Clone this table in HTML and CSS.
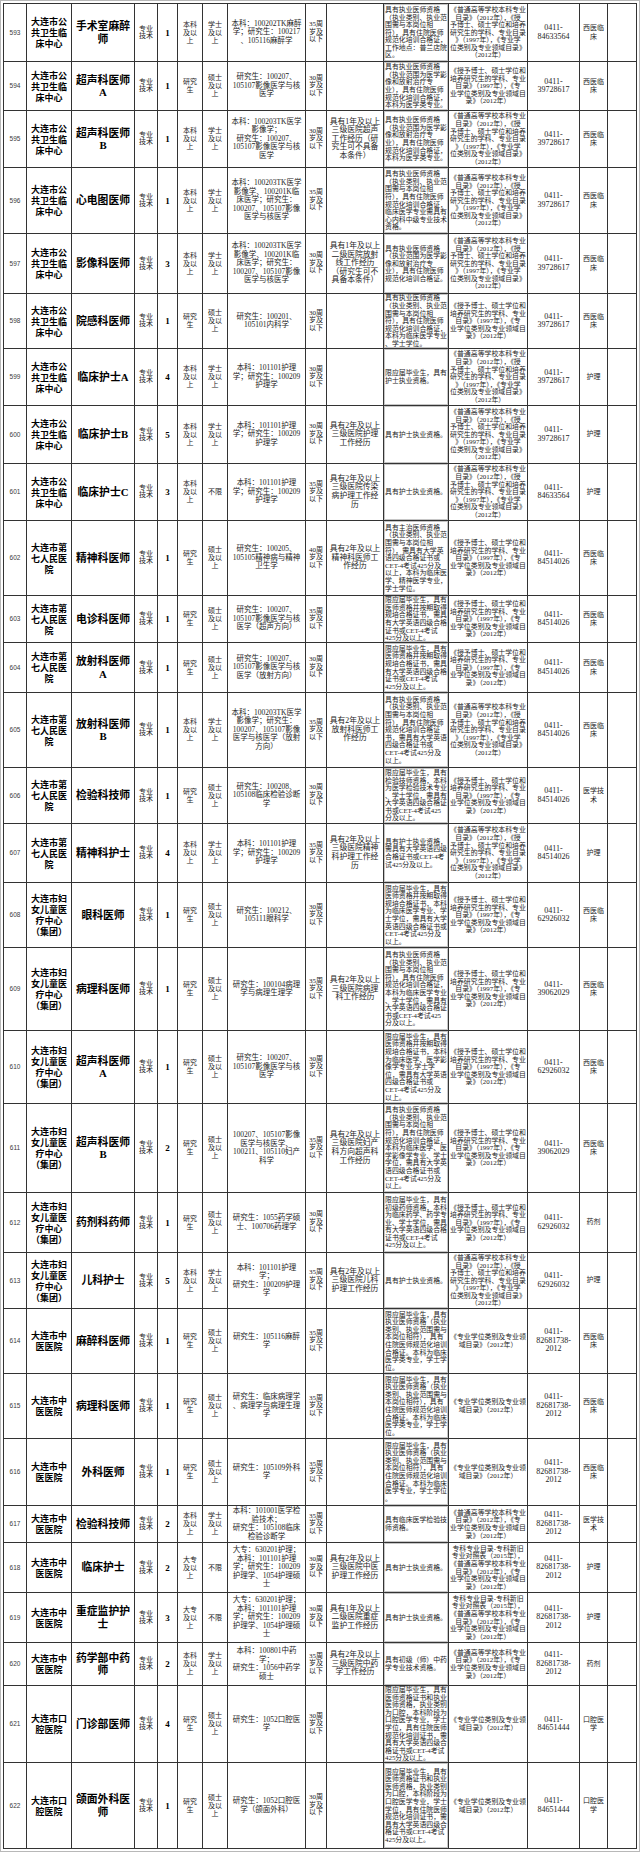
FILE: index.html
```html
<!DOCTYPE html>
<html lang="zh-CN">
<head>
<meta charset="utf-8">
<title>岗位信息表</title>
<link rel="stylesheet" href="styles.css">
</head>
<body>
<div class="frame">
<table class="jobs">
<colgroup>
<col class="w-no"><col class="w-unit"><col class="w-pos"><col class="w-cat"><col class="w-num"><col class="w-edu"><col class="w-deg"><col class="w-major"><col class="w-age"><col class="w-exp"><col class="w-cond"><col class="w-cata"><col class="w-tel"><col class="w-spec"><col class="w-note">
</colgroup>
<tbody>
<tr class="h58"><td class="no">593</td><td class="unit">大连市公<br>共卫生临<br>床中心</td><td class="pos">手术室麻醉<br>师</td><td class="cat">专业<br>技术</td><td class="num">1</td><td class="edu">本科<br>及以<br>上</td><td class="edu">学士<br>及以<br>上</td><td class="major">本科：100202TK麻醉<br>学；研究生：100217<br>、105116麻醉学</td><td class="age">35周<br>岁及<br>以下</td><td class="exp"></td><td class="cond">具有执业医师资格<br>（执业类别、执业范<br>围需与本岗位相<br>符），具有住院医师<br>规范化培训合格证，<br>工作地点：普兰店院<br>区。</td><td class="cata">《普通高等学校本科专业<br>目录》（2012年），《授<br>予博士、硕士学位和培养<br>研究生的学科、专业目录<br>》（1997年），《专业学<br>位类别及专业领域目录》<br>（2012年）</td><td class="tel">0411-<br>84633564</td><td class="spec">西医临<br>床</td><td></td></tr>
<tr class="h49"><td class="no">594</td><td class="unit">大连市公<br>共卫生临<br>床中心</td><td class="pos">超声科医师<br>A</td><td class="cat">专业<br>技术</td><td class="num">1</td><td class="edu">研究<br>生</td><td class="edu">硕士<br>及以<br>上</td><td class="major">研究生：100207、<br>105107影像医学与核<br>医学</td><td class="age">30周<br>岁及<br>以下</td><td class="exp"></td><td class="cond">具有执业医师资格<br>（执业范围为医学影<br>像和放射治疗专<br>业），具有住院医师<br>规范化培训合格证，<br>本科为医学类专业。</td><td class="cata">《授予博士、硕士学位和<br>培养研究生的学科、专业<br>目录》（1997年），《专<br>业学位类别及专业领域目<br>录》（2012年）</td><td class="tel">0411-<br>39728617</td><td class="spec">西医临<br>床</td><td></td></tr>
<tr class="h57"><td class="no">595</td><td class="unit">大连市公<br>共卫生临<br>床中心</td><td class="pos">超声科医师<br>B</td><td class="cat">专业<br>技术</td><td class="num">1</td><td class="edu">本科<br>及以<br>上</td><td class="edu">学士<br>及以<br>上</td><td class="major">本科：100203TK医学<br>影像学；<br>研究生：100207、<br>105107影像医学与核<br>医学</td><td class="age">30周<br>岁及<br>以下</td><td class="exp">具有1年及以上<br>三级医院超声<br>工作经历（研<br>究生可不具备<br>本条件）</td><td class="cond">具有执业医师资格<br>（执业范围为医学影<br>像和放射治疗专<br>业），具有住院医师<br>规范化培训合格证，<br>本科为医学类专业。</td><td class="cata">《普通高等学校本科专业<br>目录》（2012年），《授<br>予博士、硕士学位和培养<br>研究生的学科、专业目录<br>》（1997年），《专业学<br>位类别及专业领域目录》<br>（2012年）</td><td class="tel">0411-<br>39728617</td><td class="spec">西医临<br>床</td><td></td></tr>
<tr class="h66"><td class="no">596</td><td class="unit">大连市公<br>共卫生临<br>床中心</td><td class="pos">心电图医师</td><td class="cat">专业<br>技术</td><td class="num">1</td><td class="edu">本科<br>及以<br>上</td><td class="edu">学士<br>及以<br>上</td><td class="major">本科：100203TK医学<br>影像学、100201K临<br>床医学；研究生：<br>100207、105107影像<br>医学与核医学</td><td class="age">35周<br>岁及<br>以下</td><td class="exp"></td><td class="cond">具有执业医师资格<br>（执业类别、执业范<br>围需与本岗位相<br>符），具有住院医师<br>规范化培训合格证，<br>临床医学专业需具有<br>心内科中级专业技术<br>资格。</td><td class="cata">《普通高等学校本科专业<br>目录》（2012年），《授<br>予博士、硕士学位和培养<br>研究生的学科、专业目录<br>》（1997年），《专业学<br>位类别及专业领域目录》<br>（2012年）</td><td class="tel">0411-<br>39728617</td><td class="spec">西医临<br>床</td><td></td></tr>
<tr class="h60"><td class="no">597</td><td class="unit">大连市公<br>共卫生临<br>床中心</td><td class="pos">影像科医师</td><td class="cat">专业<br>技术</td><td class="num">3</td><td class="edu">本科<br>及以<br>上</td><td class="edu">学士<br>及以<br>上</td><td class="major">本科：100203TK医学<br>影像学、100201K临<br>床医学；研究生：<br>100207、105107影像<br>医学与核医学</td><td class="age">30周<br>岁及<br>以下</td><td class="exp">具有1年及以上<br>二级医院放射<br>线工作经历<br>（研究生可不<br>具备本条件）</td><td class="cond">具有执业医师资格<br>（执业范围为医学影<br>像和放射治疗专<br>业），具有住院医师<br>规范化培训合格证。</td><td class="cata">《普通高等学校本科专业<br>目录》（2012年），《授<br>予博士、硕士学位和培养<br>研究生的学科、专业目录<br>》（1997年），《专业学<br>位类别及专业领域目录》<br>（2012年）</td><td class="tel">0411-<br>39728617</td><td class="spec">西医临<br>床</td><td></td></tr>
<tr class="h55"><td class="no">598</td><td class="unit">大连市公<br>共卫生临<br>床中心</td><td class="pos">院感科医师</td><td class="cat">专业<br>技术</td><td class="num">1</td><td class="edu">研究<br>生</td><td class="edu">硕士<br>及以<br>上</td><td class="major">研究生：100201、<br>105101内科学</td><td class="age">30周<br>岁及<br>以下</td><td class="exp"></td><td class="cond">具有执业医师资格<br>（执业类别、执业范<br>围需与本岗位相<br>符），具有住院医师<br>规范化培训合格证，<br>本科为临床医学专业<br>、学士学位。</td><td class="cata">《授予博士、硕士学位和<br>培养研究生的学科、专业<br>目录》（1997年），《专<br>业学位类别及专业领域目<br>录》（2012年）</td><td class="tel">0411-<br>39728617</td><td class="spec">西医临<br>床</td><td></td></tr>
<tr class="h57"><td class="no">599</td><td class="unit">大连市公<br>共卫生临<br>床中心</td><td class="pos">临床护士A</td><td class="cat">专业<br>技术</td><td class="num">4</td><td class="edu">本科<br>及以<br>上</td><td class="edu">学士<br>及以<br>上</td><td class="major">本科：101101护理<br>学；研究生：100209<br>护理学</td><td class="age">30周<br>岁及<br>以下</td><td class="exp"></td><td class="cond">限应届毕业生，具有<br>护士执业资格。</td><td class="cata">《普通高等学校本科专业<br>目录》（2012年），《授<br>予博士、硕士学位和培养<br>研究生的学科、专业目录<br>》（1997年），《专业学<br>位类别及专业领域目录》<br>（2012年）</td><td class="tel">0411-<br>39728617</td><td class="spec">护理</td><td></td></tr>
<tr class="h58"><td class="no">600</td><td class="unit">大连市公<br>共卫生临<br>床中心</td><td class="pos">临床护士B</td><td class="cat">专业<br>技术</td><td class="num">5</td><td class="edu">本科<br>及以<br>上</td><td class="edu">学士<br>及以<br>上</td><td class="major">本科：101101护理<br>学；研究生：100209<br>护理学</td><td class="age">30周<br>岁及<br>以下</td><td class="exp">具有2年及以上<br>三级医院护理<br>工作经历</td><td class="cond">具有护士执业资格。</td><td class="cata">《普通高等学校本科专业<br>目录》（2012年），《授<br>予博士、硕士学位和培养<br>研究生的学科、专业目录<br>》（1997年），《专业学<br>位类别及专业领域目录》<br>（2012年）</td><td class="tel">0411-<br>39728617</td><td class="spec">护理</td><td></td></tr>
<tr class="h57"><td class="no">601</td><td class="unit">大连市公<br>共卫生临<br>床中心</td><td class="pos">临床护士C</td><td class="cat">专业<br>技术</td><td class="num">3</td><td class="edu">本科<br>及以<br>上</td><td class="edu">不限</td><td class="major">本科：101101护理<br>学；研究生：100209<br>护理学</td><td class="age">35周<br>岁及<br>以下</td><td class="exp">具有2年及以上<br>三级医院传染<br>病护理工作经<br>历</td><td class="cond">具有护士执业资格。</td><td class="cata">《普通高等学校本科专业<br>目录》（2012年），《授<br>予博士、硕士学位和培养<br>研究生的学科、专业目录<br>》（1997年），《专业学<br>位类别及专业领域目录》<br>（2012年）</td><td class="tel">0411-<br>84633564</td><td class="spec">护理</td><td></td></tr>
<tr class="h75"><td class="no">602</td><td class="unit">大连市第<br>七人民医<br>院</td><td class="pos">精神科医师</td><td class="cat">专业<br>技术</td><td class="num">1</td><td class="edu">研究<br>生</td><td class="edu">硕士<br>及以<br>上</td><td class="major">研究生：100205、<br>105105精神病与精神<br>卫生学</td><td class="age">40周<br>岁及<br>以下</td><td class="exp">具有2年及以上<br>精神科医师工<br>作经历</td><td class="cond">具有主治医师资格<br>（执业类别、执业范<br>围需与本岗位相<br>符），需具有大学英<br>语四级合格证书或<br>CET-4考试425分及<br>以上，本科为临床医<br>学、精神医学专业，<br>学士学位。</td><td class="cata">《授予博士、硕士学位和<br>培养研究生的学科、专业<br>目录》（1997年），《专<br>业学位类别及专业领域目<br>录》（2012年）</td><td class="tel">0411-<br>84514026</td><td class="spec">西医临<br>床</td><td></td></tr>
<tr class="h47"><td class="no">603</td><td class="unit">大连市第<br>七人民医<br>院</td><td class="pos">电诊科医师</td><td class="cat">专业<br>技术</td><td class="num">1</td><td class="edu">研究<br>生</td><td class="edu">硕士<br>及以<br>上</td><td class="major">研究生：100207、<br>105107影像医学与核<br>医学（超声方向）</td><td class="age">35周<br>岁及<br>以下</td><td class="exp"></td><td class="cond">限应届毕业生，具有<br>医师资格并按期取得<br>规培合格证书，需具<br>有大学英语四级合格<br>证书或CET-4考试<br>425分及以上。</td><td class="cata">《授予博士、硕士学位和<br>培养研究生的学科、专业<br>目录》（1997年），《专<br>业学位类别及专业领域目<br>录》（2012年）</td><td class="tel">0411-<br>84514026</td><td class="spec">西医临<br>床</td><td></td></tr>
<tr class="h50"><td class="no">604</td><td class="unit">大连市第<br>七人民医<br>院</td><td class="pos">放射科医师<br>A</td><td class="cat">专业<br>技术</td><td class="num">1</td><td class="edu">研究<br>生</td><td class="edu">硕士<br>及以<br>上</td><td class="major">研究生：100207、<br>105107影像医学与核<br>医学（放射方向）</td><td class="age">30周<br>岁及<br>以下</td><td class="exp"></td><td class="cond">限应届毕业生，具有<br>医师资格并按期取得<br>规培合格证书，需具<br>有大学英语四级合格<br>证书或CET-4考试<br>425分及以上。</td><td class="cata">《授予博士、硕士学位和<br>培养研究生的学科、专业<br>目录》（1997年），《专<br>业学位类别及专业领域目<br>录》（2012年）</td><td class="tel">0411-<br>84514026</td><td class="spec">西医临<br>床</td><td></td></tr>
<tr class="h75"><td class="no">605</td><td class="unit">大连市第<br>七人民医<br>院</td><td class="pos">放射科医师<br>B</td><td class="cat">专业<br>技术</td><td class="num">1</td><td class="edu">本科<br>及以<br>上</td><td class="edu">学士<br>及以<br>上</td><td class="major">本科：100203TK医学<br>影像学；研究生：<br>100207、105107影像<br>医学与核医学（放射<br>方向）</td><td class="age">35周<br>岁及<br>以下</td><td class="exp">具有2年及以上<br>放射科医师工<br>作经历</td><td class="cond">具有执业医师资格<br>（执业类别、执业范<br>围需与本岗位相<br>符），具有住院医师<br>规范化培训合格证<br>书，需具有大学英语<br>四级合格证书或<br>CET-4考试425分及<br>以上。</td><td class="cata">《普通高等学校本科专业<br>目录》（2012年），《授<br>予博士、硕士学位和培养<br>研究生的学科、专业目录<br>》（1997年），《专业学<br>位类别及专业领域目录》<br>（2012年）</td><td class="tel">0411-<br>84514026</td><td class="spec">西医临<br>床</td><td></td></tr>
<tr class="h56"><td class="no">606</td><td class="unit">大连市第<br>七人民医<br>院</td><td class="pos">检验科技师</td><td class="cat">专业<br>技术</td><td class="num">1</td><td class="edu">研究<br>生</td><td class="edu">硕士<br>及以<br>上</td><td class="major">研究生：100208、<br>105108临床检验诊断<br>学</td><td class="age">30周<br>岁及<br>以下</td><td class="exp"></td><td class="cond">限应届毕业生，具有<br>检验技师资格，本科<br>为医学检验技术专业<br>、学士学位，需具有<br>大学英语四级合格证<br>书或CET-4考试425<br>分及以上。</td><td class="cata">《授予博士、硕士学位和<br>培养研究生的学科、专业<br>目录》（1997年），《专<br>业学位类别及专业领域目<br>录》（2012年）</td><td class="tel">0411-<br>84514026</td><td class="spec">医学技<br>术</td><td></td></tr>
<tr class="h59"><td class="no">607</td><td class="unit">大连市第<br>七人民医<br>院</td><td class="pos">精神科护士</td><td class="cat">专业<br>技术</td><td class="num">4</td><td class="edu">本科<br>及以<br>上</td><td class="edu">学士<br>及以<br>上</td><td class="major">本科：101101护理<br>学；研究生：100209<br>护理学</td><td class="age">35周<br>岁及<br>以下</td><td class="exp">具有2年及以上<br>三级医院精神<br>科护理工作经<br>历</td><td class="cond">具有护士执业资格，<br>需具有大学英语四级<br>合格证书或CET-4考<br>试425分及以上。</td><td class="cata">《普通高等学校本科专业<br>目录》（2012年），《授<br>予博士、硕士学位和培养<br>研究生的学科、专业目录<br>》（1997年），《专业学<br>位类别及专业领域目录》<br>（2012年）</td><td class="tel">0411-<br>84514026</td><td class="spec">护理</td><td></td></tr>
<tr class="h65"><td class="no">608</td><td class="unit">大连市妇<br>女儿童医<br>疗中心<br>（集团）</td><td class="pos">眼科医师</td><td class="cat">专业<br>技术</td><td class="num">1</td><td class="edu">研究<br>生</td><td class="edu">硕士<br>及以<br>上</td><td class="major">研究生：100212、<br>105111眼科学</td><td class="age">30周<br>岁及<br>以下</td><td class="exp"></td><td class="cond">限应届毕业生，具有<br>医师资格并按期取得<br>规培合格证书，本科<br>为临床医学专业、学<br>士学位，需具有大学<br>英语四级合格证书或<br>CET-4考试425分及<br>以上。</td><td class="cata">《授予博士、硕士学位和<br>培养研究生的学科、专业<br>目录》（1997年），《专<br>业学位类别及专业领域目<br>录》（2012年）</td><td class="tel">0411-<br>62926032</td><td class="spec">西医临<br>床</td><td></td></tr>
<tr class="h83"><td class="no">609</td><td class="unit">大连市妇<br>女儿童医<br>疗中心<br>（集团）</td><td class="pos">病理科医师</td><td class="cat">专业<br>技术</td><td class="num">1</td><td class="edu">研究<br>生</td><td class="edu">硕士<br>及以<br>上</td><td class="major">研究生：100104病理<br>学与病理生理学</td><td class="age">35周<br>岁及<br>以下</td><td class="exp">具有2年及以上<br>三级医院病理<br>科工作经历</td><td class="cond">具有执业医师资格<br>（执业类别、执业范<br>围需与本岗位相<br>符），具有住院医师<br>规范化培训合格证，<br>本科为临床医学专业<br>、学士学位，需具有<br>大学英语四级合格证<br>书或CET-4考试425<br>分及以上。</td><td class="cata">《授予博士、硕士学位和<br>培养研究生的学科、专业<br>目录》（1997年），《专<br>业学位类别及专业领域目<br>录》（2012年）</td><td class="tel">0411-<br>39062029</td><td class="spec">西医临<br>床</td><td></td></tr>
<tr class="h73"><td class="no">610</td><td class="unit">大连市妇<br>女儿童医<br>疗中心<br>（集团）</td><td class="pos">超声科医师<br>A</td><td class="cat">专业<br>技术</td><td class="num">1</td><td class="edu">研究<br>生</td><td class="edu">硕士<br>及以<br>上</td><td class="major">研究生：100207、<br>105107影像医学与核<br>医学</td><td class="age">30周<br>岁及<br>以下</td><td class="exp"></td><td class="cond">限应届毕业生，具有<br>医师资格并按期取得<br>规培合格证书，本科<br>为临床医学、医学影<br>像学专业,学士学<br>位，需具有大学英语<br>四级合格证书或<br>CET-4考试425分及<br>以上。</td><td class="cata">《授予博士、硕士学位和<br>培养研究生的学科、专业<br>目录》（1997年），《专<br>业学位类别及专业领域目<br>录》（2012年）</td><td class="tel">0411-<br>62926032</td><td class="spec">西医临<br>床</td><td></td></tr>
<tr class="h89"><td class="no">611</td><td class="unit">大连市妇<br>女儿童医<br>疗中心<br>（集团）</td><td class="pos">超声科医师<br>B</td><td class="cat">专业<br>技术</td><td class="num">2</td><td class="edu">研究<br>生</td><td class="edu">硕士<br>及以<br>上</td><td class="major">100207、105107影像<br>医学与核医学、<br>100211、105110妇产<br>科学</td><td class="age">35周<br>岁及<br>以下</td><td class="exp">具有2年及以上<br>三级医院妇产<br>科方向超声科<br>工作经历</td><td class="cond">具有执业医师资格<br>（执业类别、执业范<br>围需与本岗位相<br>符），具有住院医师<br>规范化培训合格证，<br>本科为临床医学、医<br>学影像学专业、学士<br>学位，需具有大学英<br>语四级合格证书或<br>CET-4考试425分及<br>以上。</td><td class="cata">《授予博士、硕士学位和<br>培养研究生的学科、专业<br>目录》（1997年），《专<br>业学位类别及专业领域目<br>录》（2012年）</td><td class="tel">0411-<br>39062029</td><td class="spec">西医临<br>床</td><td></td></tr>
<tr class="h60"><td class="no">612</td><td class="unit">大连市妇<br>女儿童医<br>疗中心<br>（集团）</td><td class="pos">药剂科药师</td><td class="cat">专业<br>技术</td><td class="num">1</td><td class="edu">研究<br>生</td><td class="edu">硕士<br>及以<br>上</td><td class="major">研究生：1055药学硕<br>士、100706药理学</td><td class="age">30周<br>岁及<br>以下</td><td class="exp"></td><td class="cond">限应届毕业生，具有<br>初级药师资格，本科<br>为临床药学、药学专<br>业、学士学位，需具<br>有大学英语四级合格<br>证书或CET-4考试<br>425分及以上。</td><td class="cata">《授予博士、硕士学位和<br>培养研究生的学科、专业<br>目录》（1997年），《专<br>业学位类别及专业领域目<br>录》（2012年）</td><td class="tel">0411-<br>62926032</td><td class="spec">药剂</td><td></td></tr>
<tr class="h56"><td class="no">613</td><td class="unit">大连市妇<br>女儿童医<br>疗中心<br>（集团）</td><td class="pos">儿科护士</td><td class="cat">专业<br>技术</td><td class="num">5</td><td class="edu">本科<br>及以<br>上</td><td class="edu">学士<br>及以<br>上</td><td class="major">本科：101101护理<br>学；<br>研究生：100209护理<br>学</td><td class="age">35周<br>岁及<br>以下</td><td class="exp">具有2年及以上<br>三级医院儿科<br>护理工作经历</td><td class="cond">具有护士执业资格。</td><td class="cata">《普通高等学校本科专业<br>目录》（2012年），《授<br>予博士、硕士学位和培养<br>研究生的学科、专业目录<br>》（1997年），《专业学<br>位类别及专业领域目录》<br>（2012年）</td><td class="tel">0411-<br>62926032</td><td class="spec">护理</td><td></td></tr>
<tr class="h65"><td class="no">614</td><td class="unit">大连市中<br>医医院</td><td class="pos">麻醉科医师</td><td class="cat">专业<br>技术</td><td class="num">1</td><td class="edu">研究<br>生</td><td class="edu">硕士<br>及以<br>上</td><td class="major">研究生：105116麻醉<br>学</td><td class="age">35周<br>岁及<br>以下</td><td class="exp"></td><td class="cond">限应届毕业生，具有<br>执业医师资格（执业<br>类别、执业范围需与<br>本岗位相符），具有<br>住院医师规范化培训<br>合格证。本科为临床<br>医学类专业，学士学<br>位。</td><td class="cata">《专业学位类别及专业领<br>域目录》（2012年）</td><td class="tel">0411-<br>82681738-<br>2012</td><td class="spec">西医临<br>床</td><td></td></tr>
<tr class="h65"><td class="no">615</td><td class="unit">大连市中<br>医医院</td><td class="pos">病理科医师</td><td class="cat">专业<br>技术</td><td class="num">1</td><td class="edu">研究<br>生</td><td class="edu">硕士<br>及以<br>上</td><td class="major">研究生：临床病理学<br>、病理学与病理生理<br>学</td><td class="age">35周<br>岁及<br>以下</td><td class="exp"></td><td class="cond">限应届毕业生，具有<br>执业医师资格（执业<br>类别、执业范围需与<br>本岗位相符），具有<br>住院医师规范化培训<br>合格证。本科为临床<br>医学类专业，学士学<br>位。</td><td class="cata">《专业学位类别及专业领<br>域目录》（2012年）</td><td class="tel">0411-<br>82681738-<br>2012</td><td class="spec">西医临<br>床</td><td></td></tr>
<tr class="h67"><td class="no">616</td><td class="unit">大连市中<br>医医院</td><td class="pos">外科医师</td><td class="cat">专业<br>技术</td><td class="num">1</td><td class="edu">研究<br>生</td><td class="edu">硕士<br>及以<br>上</td><td class="major">研究生：105109外科<br>学</td><td class="age">35周<br>岁及<br>以下</td><td class="exp"></td><td class="cond">限应届毕业生，具有<br>执业医师资格（执业<br>类别、执业范围需与<br>本岗位相符），具有<br>住院医师规范化培训<br>合格证。本科为临床<br>医学专业，学士学位<br>。</td><td class="cata">《专业学位类别及专业领<br>域目录》（2012年）</td><td class="tel">0411-<br>82681738-<br>2012</td><td class="spec">西医临<br>床</td><td></td></tr>
<tr class="h37"><td class="no">617</td><td class="unit">大连市中<br>医医院</td><td class="pos">检验科技师</td><td class="cat">专业<br>技术</td><td class="num">2</td><td class="edu">本科<br>及以<br>上</td><td class="edu">学士<br>及以<br>上</td><td class="major">本科：101001医学检<br>验技术；<br>研究生：105108临床<br>检验诊断学</td><td class="age">35周<br>岁及<br>以下</td><td class="exp"></td><td class="cond">具有临床医学检验技<br>师资格。</td><td class="cata">《普通高等学校本科专业<br>目录》（2012年），《专<br>业学位类别及专业领域目<br>录》（2012年）</td><td class="tel">0411-<br>82681738-<br>2012</td><td class="spec">医学技<br>术</td><td></td></tr>
<tr class="h50"><td class="no">618</td><td class="unit">大连市中<br>医医院</td><td class="pos">临床护士</td><td class="cat">专业<br>技术</td><td class="num">2</td><td class="edu">大专<br>及以<br>上</td><td class="edu">不限</td><td class="major">大专：630201护理；<br>本科：101101护理<br>学；研究生：100209<br>护理学、1054护理硕<br>士</td><td class="age">30周<br>岁及<br>以下</td><td class="exp">具有2年及以上<br>三级医院中医<br>护理工作经历</td><td class="cond">具有护士执业资格。</td><td class="cata">专科专业目录-专科新旧<br>专业对照表（2015年），<br>《普通高等学校本科专业<br>目录》（2012年），《专<br>业学位类别及专业领域目<br>录》（2012年）</td><td class="tel">0411-<br>82681738-<br>2012</td><td class="spec">护理</td><td></td></tr>
<tr class="h50"><td class="no">619</td><td class="unit">大连市中<br>医医院</td><td class="pos">重症监护护<br>士</td><td class="cat">专业<br>技术</td><td class="num">3</td><td class="edu">大专<br>及以<br>上</td><td class="edu">不限</td><td class="major">大专：630201护理；<br>本科：101101护理<br>学；研究生：100209<br>护理学、1054护理硕<br>士</td><td class="age">30周<br>岁及<br>以下</td><td class="exp">具有1年及以上<br>二级医院重症<br>监护工作经历</td><td class="cond">具有护士执业资格。</td><td class="cata">专科专业目录-专科新旧<br>专业对照表（2015年），<br>《普通高等学校本科专业<br>目录》（2012年），《专<br>业学位类别及专业领域目<br>录》（2012年）</td><td class="tel">0411-<br>82681738-<br>2012</td><td class="spec">护理</td><td></td></tr>
<tr class="h43"><td class="no">620</td><td class="unit">大连市中<br>医医院</td><td class="pos">药学部中药<br>师</td><td class="cat">专业<br>技术</td><td class="num">2</td><td class="edu">本科<br>及以<br>上</td><td class="edu">学士<br>及以<br>上</td><td class="major">本科：100801中药<br>学；<br>研究生：1056中药学<br>硕士</td><td class="age">35周<br>岁及<br>以下</td><td class="exp">具有2年及以上<br>三级医院中药<br>学工作经历</td><td class="cond">具有初级（师）中药<br>学专业技术资格。</td><td class="cata">《普通高等学校本科专业<br>目录》（2012年），《专<br>业学位类别及专业领域目<br>录》（2012年）</td><td class="tel">0411-<br>82681738-<br>2012</td><td class="spec">药剂</td><td></td></tr>
<tr class="h77"><td class="no">621</td><td class="unit">大连市口<br>腔医院</td><td class="pos">门诊部医师</td><td class="cat">专业<br>技术</td><td class="num">4</td><td class="edu">研究<br>生</td><td class="edu">硕士<br>及以<br>上</td><td class="major">研究生：1052口腔医<br>学</td><td class="age">30周<br>岁及<br>以下</td><td class="exp"></td><td class="cond">限应届毕业生，具有<br>医师资格证书和执业<br>医师资格，执业类别<br>为口腔，本科阶段为<br>口腔医学专业，学士<br>学位，具有住院医师<br>规范化培训证书，需<br>具有大学英语四级合<br>格证书或CET-4考试<br>425分及以上。</td><td class="cata">《专业学位类别及专业领<br>域目录》（2012年）</td><td class="tel">0411-<br>84651444</td><td class="spec">口腔医<br>学</td><td></td></tr>
<tr class="h86"><td class="no">622</td><td class="unit">大连市口<br>腔医院</td><td class="pos">颌面外科医<br>师</td><td class="cat">专业<br>技术</td><td class="num">1</td><td class="edu">研究<br>生</td><td class="edu">硕士<br>及以<br>上</td><td class="major">研究生：1052口腔医<br>学（颌面外科）</td><td class="age">30周<br>岁及<br>以下</td><td class="exp"></td><td class="cond">限应届毕业生，具有<br>医师资格证书和执业<br>医师资格，执业类别<br>为口腔，本科阶段为<br>口腔医学专业，学士<br>学位，具有住院医师<br>规范化培训证书，需<br>具有大学英语四级合<br>格证书或CET-4考试<br>425分及以上。</td><td class="cata">《专业学位类别及专业领<br>域目录》（2012年）</td><td class="tel">0411-<br>84651444</td><td class="spec">口腔医<br>学</td><td></td></tr>
</tbody>
</table>
</div>
</body>
</html>
```

FILE: styles.css
```css
html, body {
  margin: 0;
  padding: 0;
  background: #ffffff;
}

.frame {
  width: max-content;
  border: 1px solid #b8b8b8;
  padding: 2px;
}

.jobs {
  border-collapse: collapse;
  table-layout: fixed;
  width: 633px;
  font-family: "Liberation Serif", "Noto Sans CJK SC", serif;
  color: #1c1c1c;
}

.jobs td {
  border: 1px solid #333333;
  padding: 0;
  text-align: center;
  vertical-align: middle;
  font-size: 7px;
  line-height: 8px;
  white-space: nowrap;
}

.w-no { width: 23px; }
.w-unit { width: 45px; }
.w-pos { width: 63px; }
.w-cat { width: 23px; }
.w-num { width: 20px; }
.w-edu { width: 25px; }
.w-deg { width: 25px; }
.w-major { width: 78px; }
.w-age { width: 21px; }
.w-exp { width: 57px; }
.w-cond { width: 65px; }
.w-cata { width: 79px; }
.w-tel { width: 52px; }
.w-spec { width: 28px; }
.w-note { width: 29px; }

.h37 { height: 37px; }
.h43 { height: 43px; }
.h47 { height: 47px; }
.h49 { height: 49px; }
.h50 { height: 50px; }
.h55 { height: 55px; }
.h56 { height: 56px; }
.h57 { height: 57px; }
.h58 { height: 58px; }
.h59 { height: 59px; }
.h60 { height: 60px; }
.h65 { height: 65px; }
.h66 { height: 66px; }
.h67 { height: 67px; }
.h73 { height: 73px; }
.h75 { height: 75px; }
.h77 { height: 77px; }
.h83 { height: 83px; }
.h86 { height: 86px; }
.h89 { height: 89px; }

.jobs td.no {
  font-family: "Liberation Sans", "Noto Sans CJK SC", sans-serif;
  font-size: 6.5px;
  color: #3a3a3a;
}

.jobs td.unit {
  font-family: "Noto Sans CJK SC", sans-serif;
  font-weight: 700;
  font-size: 9px;
  line-height: 11px;
  color: #000000;
}

.jobs td.pos {
  font-weight: 700;
  font-size: 10.8px;
  line-height: 12.5px;
  color: #000000;
  padding: 0 2px;
}

.jobs td.cat {
  font-size: 7px;
  line-height: 7px;
}

.jobs td.num {
  font-weight: 700;
  font-size: 9px;
  color: #000000;
}

.jobs td.edu {
  font-size: 7px;
  line-height: 8px;
}

.jobs td.major {
  font-size: 7.5px;
  line-height: 8.5px;
  padding: 0 2px;
}

.jobs td.age {
  font-size: 7px;
  line-height: 7.5px;
}

.jobs td.exp {
  font-size: 7.8px;
  line-height: 8.6px;
  padding: 0 2px;
}

.jobs td.cond {
  font-size: 6.9px;
  line-height: 7.6px;
  text-align: left;
  padding: 0 0 0 1px;
  box-shadow: inset 0 0 0 1px #c6c6c6;
}

.jobs td.cata {
  font-size: 6.9px;
  line-height: 7.6px;
}

.jobs td.tel {
  font-size: 8px;
  line-height: 8.5px;
}

.jobs td.spec {
  font-size: 7px;
  line-height: 8.5px;
}
```
